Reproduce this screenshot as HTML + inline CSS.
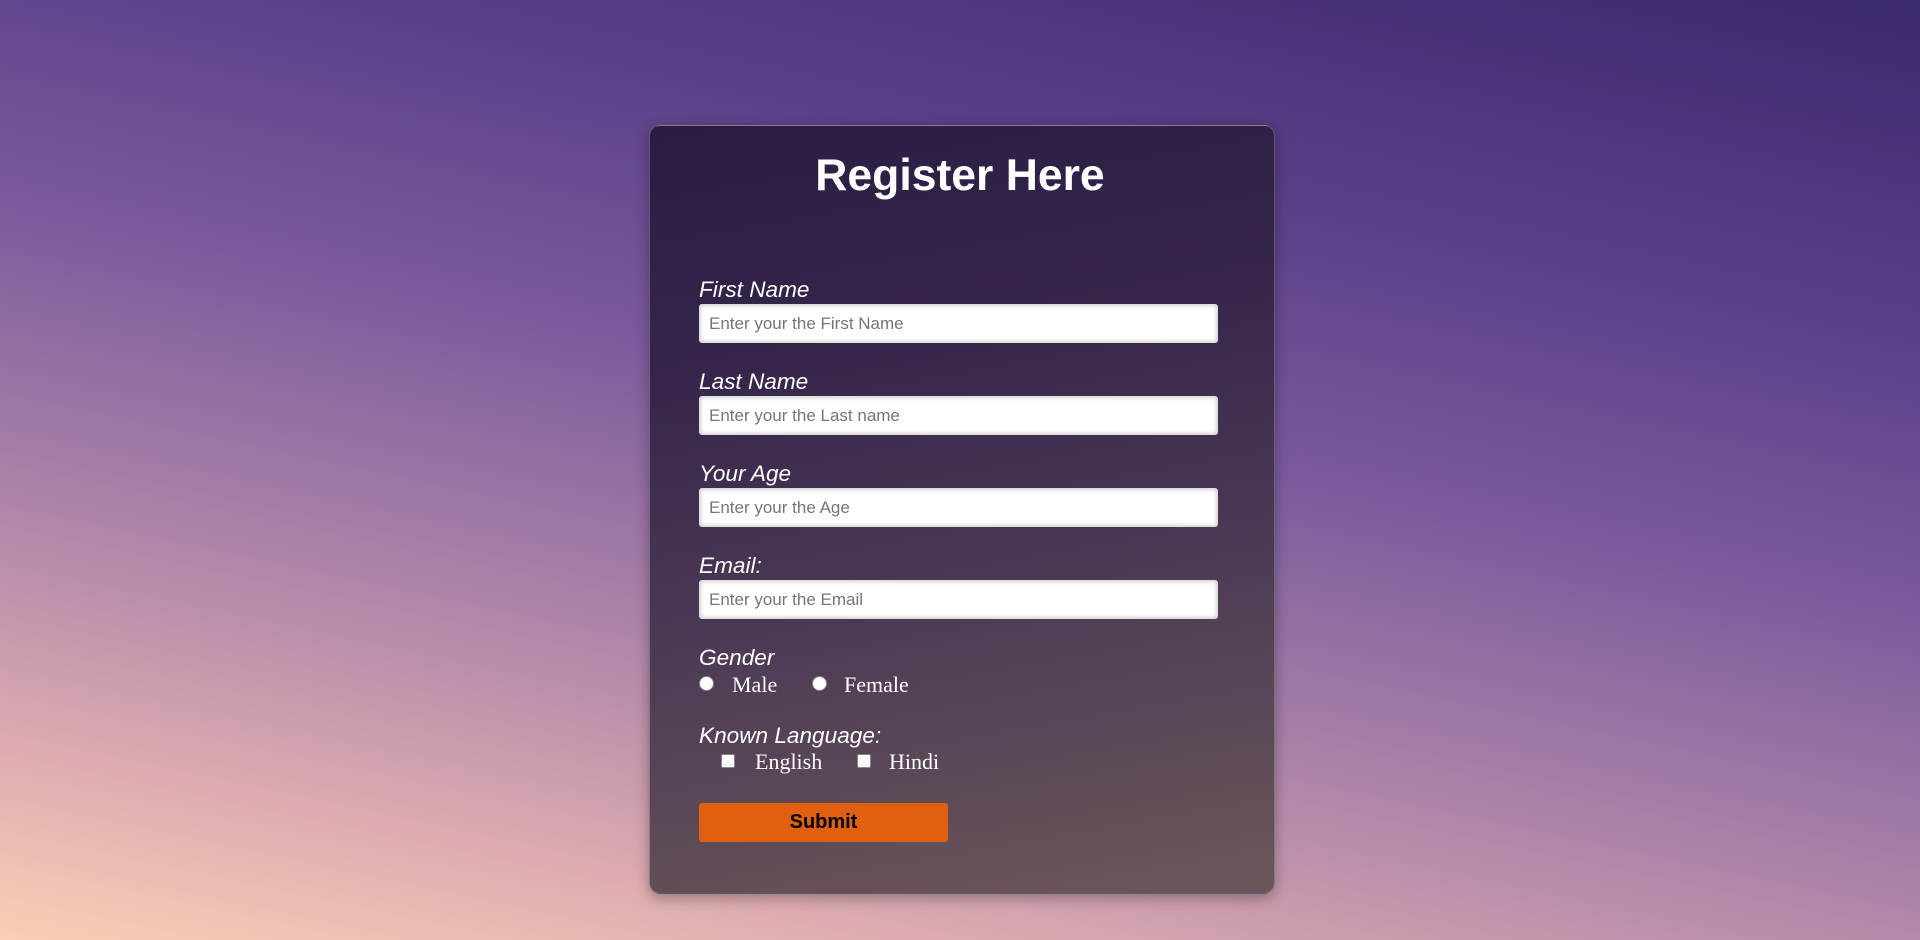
<!DOCTYPE html>
<html><head><meta charset="utf-8"><style>
html,body{margin:0;padding:0;width:1920px;height:940px;overflow:hidden;}
body{background:linear-gradient(12deg,#f9cfb6 0%,#dcaab0 15%,#a880a8 35%,#7a5a9c 55%,#5a3f88 75%,#3b2a6c 100%);font-family:"Liberation Sans",Arial,sans-serif;position:relative;}
.card{position:absolute;left:649px;top:125px;width:624px;height:767px;border-radius:11px;border:1px solid rgba(255,255,255,0.25);
background:linear-gradient(170deg,#2a1c43 0%,#36264b 30%,#4c3a55 60%,#6b5759 100%);box-shadow:0 4px 14px rgba(0,0,0,0.3);}
h1{position:absolute;left:0;width:100%;top:148px;margin:0;text-align:center;color:#fff;font-size:44.5px;font-weight:bold;line-height:56px;}
.lbl{position:absolute;left:699px;color:#fff;font-style:italic;font-size:22.6px;line-height:28px;}
.in{position:absolute;left:699px;height:37px;background:#fff;border:1px solid #ddd;border-radius:3px;box-shadow:inset 0 0 5px rgba(0,0,0,0.25);color:#757575;font-size:17px;line-height:37px;padding-left:9px;box-sizing:content-box;width:508px;}
.rad{position:absolute;width:13px;height:13px;border-radius:50%;background:#fff;border:1px solid #888;}
.chk{position:absolute;width:12px;height:12px;border-radius:2px;background:#fff;border:1px solid #888;}
.t{position:absolute;color:#fff;font-family:"Liberation Serif",serif;font-size:22px;line-height:26px;}
.btn{position:absolute;left:699px;top:803px;width:249px;height:39px;background:#e06010;border-radius:3px;color:#000;font-weight:bold;font-size:20px;line-height:39px;text-align:center;}
</style></head><body>
<div class="card"></div>
<h1>Register Here</h1>
<div class="lbl" style="top:276px">First Name</div>
<div class="in" style="top:304px">Enter your the First Name</div>
<div class="lbl" style="top:368px">Last Name</div>
<div class="in" style="top:396px">Enter your the Last name</div>
<div class="lbl" style="top:460px">Your Age</div>
<div class="in" style="top:488px">Enter your the Age</div>
<div class="lbl" style="top:552px">Email:</div>
<div class="in" style="top:580px">Enter your the Email</div>
<div class="lbl" style="top:644px">Gender</div>
<div class="rad" style="left:699px;top:676px"></div>
<div class="t" style="left:732px;top:672px">Male</div>
<div class="rad" style="left:812px;top:676px"></div>
<div class="t" style="left:844px;top:672px">Female</div>
<div class="lbl" style="top:722px">Known Language:</div>
<div class="chk" style="left:721px;top:754px"></div>
<div class="t" style="left:755px;top:749px">English</div>
<div class="chk" style="left:857px;top:754px"></div>
<div class="t" style="left:889px;top:749px">Hindi</div>
<div class="btn">Submit</div>
</body></html>
